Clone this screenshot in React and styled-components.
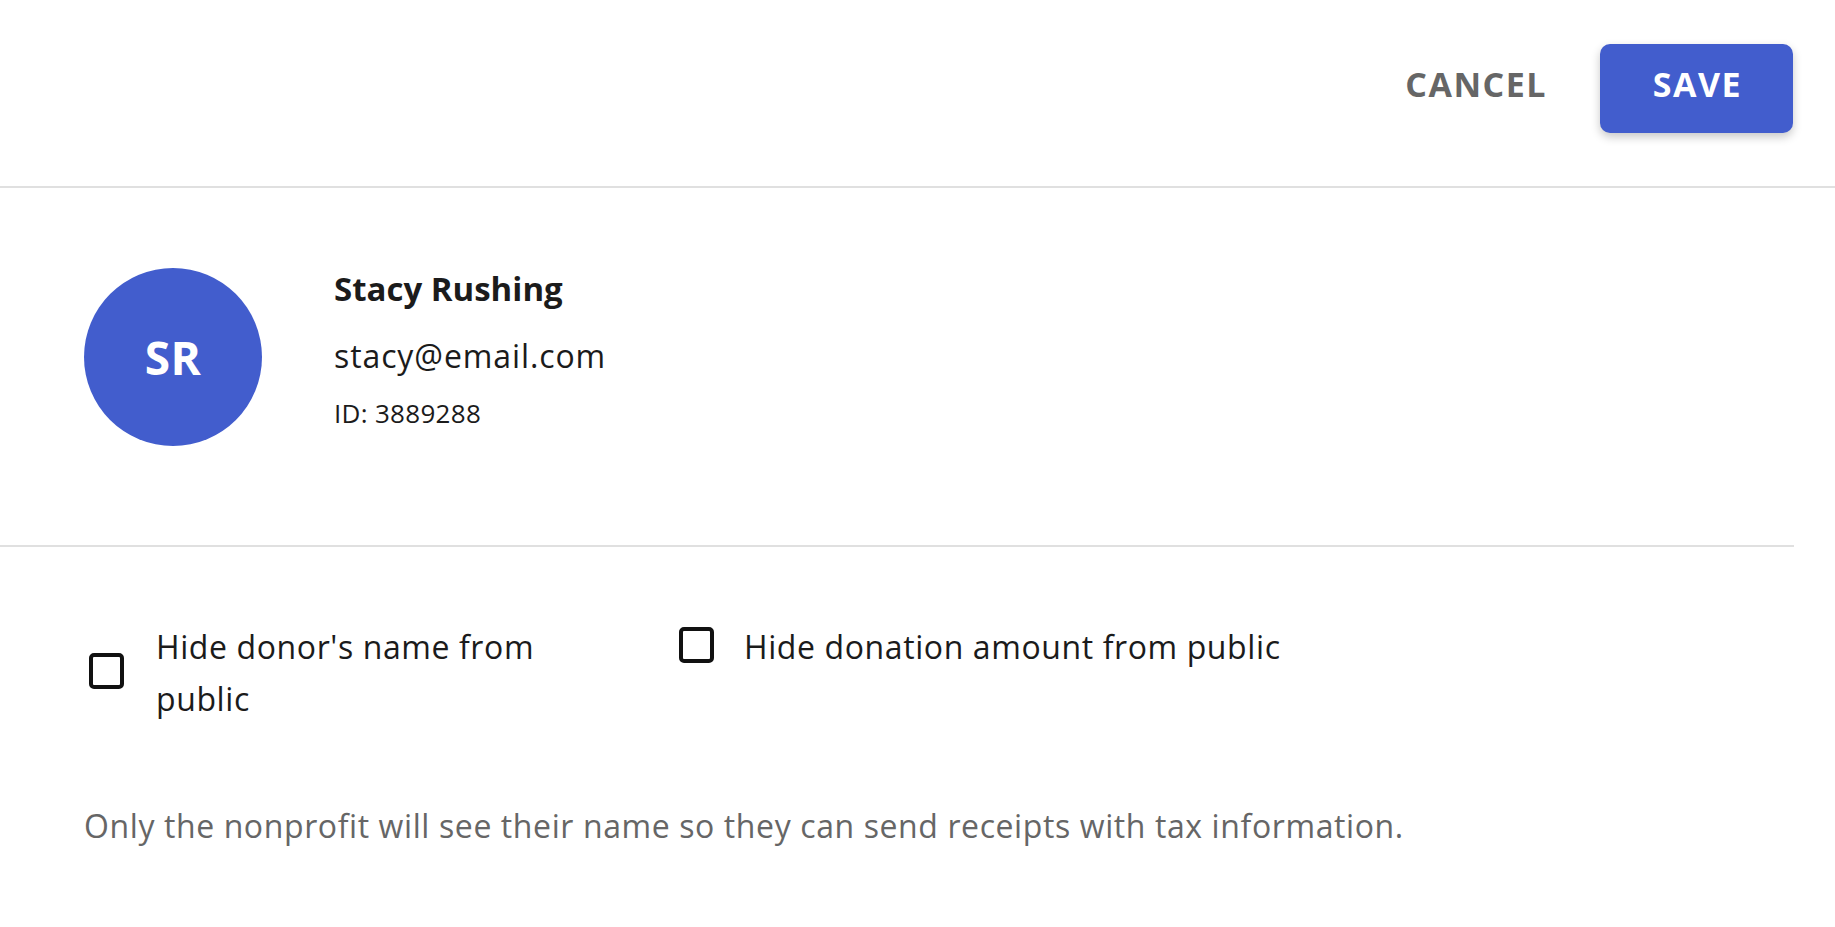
import React from "react";
import styled, { createGlobalStyle } from "styled-components";

const GlobalStyle = createGlobalStyle`
  html, body { margin: 0; padding: 0; background: #ffffff; }
  body { font-family: "Open Sans", Lato, sans-serif; color: #1b1b1b; }
  * { box-sizing: border-box; }
`;

const Page = styled.div`
  width: 1835px;
  min-height: 927px;
  background: #fff;
`;

const Header = styled.header`
  display: flex;
  justify-content: flex-end;
  align-items: center;
  gap: 53px;
  padding: 44px 42px 53px 0;
  border-bottom: 2px solid #e0e0e0;
`;

const TextButton = styled.button`
  border: none;
  background: none;
  padding: 0;
  margin-bottom: 10px;
  font-family: inherit;
  font-weight: 700;
  font-size: 34px;
  line-height: 44px;
  letter-spacing: 1.5px;
  color: #666666;
  cursor: pointer;
`;

const PrimaryButton = styled.button`
  display: flex;
  align-items: center;
  justify-content: center;
  width: 193px;
  height: 89px;
  padding: 0 0 10px 2px;
  border: none;
  border-radius: 10px;
  background: #425dcd;
  color: #ffffff;
  font-family: inherit;
  font-weight: 700;
  font-size: 34px;
  line-height: 44px;
  letter-spacing: 1.5px;
  box-shadow: 0 4px 10px rgba(0, 0, 0, 0.22);
  cursor: pointer;
`;

const Body = styled.main`
  padding: 0 41px 0 0;
`;

const Profile = styled.section`
  display: flex;
  align-items: flex-start;
  gap: 72px;
  padding: 80px 0 99px 84px;
  border-bottom: 2px solid #e0e0e0;
`;

const Avatar = styled.div`
  flex: none;
  width: 178px;
  height: 178px;
  border-radius: 50%;
  background: #425dcd;
  color: #fff;
  display: flex;
  align-items: center;
  justify-content: center;
  font-weight: 700;
  font-size: 46px;
  letter-spacing: 0.5px;
`;

const Info = styled.div`
  display: flex;
  flex-direction: column;
  padding-top: 1px;
`;

const Name = styled.div`
  font-weight: 700;
  font-size: 33px;
  line-height: 40px;
  color: #1b1b1b;
`;

const Email = styled.div`
  margin-top: 27px;
  font-size: 32px;
  line-height: 40px;
  letter-spacing: 0.9px;
  color: #1b1b1b;
`;

const Id = styled.div`
  margin-top: 22px;
  font-size: 26px;
  line-height: 30px;
  letter-spacing: 0.3px;
  color: #1b1b1b;
`;

const Options = styled.section`
  display: flex;
  align-items: flex-start;
  padding: 74px 0 0 89px;
`;

const Option = styled.label`
  display: flex;
  align-items: center;
  gap: ${(p) => p.$gap}px;
  width: ${(p) => p.$width}px;
  cursor: pointer;
`;

const Box = styled.span`
  flex: none;
  width: 35px;
  height: 36px;
  margin-bottom: 4px;
  border: 4px solid #111;
  border-radius: 5px;
  background: #fff;
`;

const OptionText = styled.span`
  font-size: 32px;
  line-height: 52px;
  letter-spacing: 0.6px;
  color: #1b1b1b;
  max-width: ${(p) => (p.$max ? `${p.$max}px` : "none")};
`;

const Note = styled.p`
  margin: 81px 0 0 84px;
  font-size: 32px;
  line-height: 40px;
  letter-spacing: 0.6px;
  color: #666666;
`;

export default function App() {
  return (
    <Page>
      <GlobalStyle />
      <Header>
        <TextButton>CANCEL</TextButton>
        <PrimaryButton>SAVE</PrimaryButton>
      </Header>
      <Body>
        <Profile>
          <Avatar>SR</Avatar>
          <Info>
            <Name>Stacy Rushing</Name>
            <Email>stacy@email.com</Email>
            <Id>ID: 3889288</Id>
          </Info>
        </Profile>
        <Options>
          <Option $width={590} $gap={32}>
            <Box />
            <OptionText $max={430}>Hide donor's name from public</OptionText>
          </Option>
          <Option $width={700} $gap={30}>
            <Box />
            <OptionText>Hide donation amount from public</OptionText>
          </Option>
        </Options>
      </Body>
      <Note>Only the nonprofit will see their name so they can send receipts with tax information.</Note>
    </Page>
  );
}
